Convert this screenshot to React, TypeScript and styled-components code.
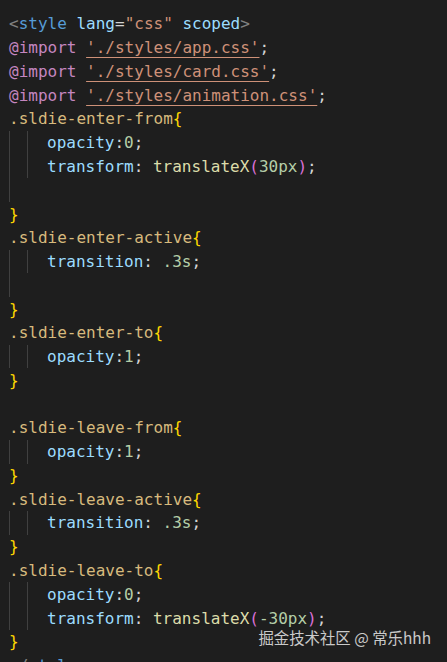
import React from "react";
import styled, { createGlobalStyle } from "styled-components";

const Global = createGlobalStyle`
  html, body { margin: 0; padding: 0; background: #1e1e1e; }
  body { width: 447px; height: 662px; overflow: hidden; }
`;

type Kind =
  | "tagp" | "tag" | "attr" | "eq" | "str" | "kw" | "sel" | "brace"
  | "prop" | "punc" | "num" | "fn" | "paren";

const colors: Record<Kind, string> = {
  tagp: "#808080",
  tag: "#569cd6",
  attr: "#9cdcfe",
  eq: "#d4d4d4",
  str: "#ce9178",
  kw: "#c586c0",
  sel: "#d7ba7d",
  brace: "#ffd700",
  prop: "#9cdcfe",
  punc: "#d4d4d4",
  num: "#b5cea8",
  fn: "#dcdcaa",
  paren: "#da70d6",
};

const Screen = styled.div`
  position: relative;
  width: 447px;
  height: 662px;
  overflow: hidden;
  background: #1e1e1e;
`;

const Editor = styled.div`
  display: flex;
  flex-direction: column;
  padding: 12px 0 0 9px;
  font-family: "DejaVu Sans Mono", "Liberation Mono", monospace;
  font-size: 16px;
`;

const Line = styled.div`
  display: flex;
  align-items: center;
  height: 23.77px;
  white-space: pre;
`;

const Guide = styled.span<{ $w: number }>`
  align-self: stretch;
  width: ${(p) => p.$w}px;
  flex: none;
  border-left: 1px solid #404040;
  box-sizing: border-box;
`;

const Token = styled.span<{ $k: Kind; $link?: boolean }>`
  color: ${(p) => colors[p.$k]};
  text-decoration: ${(p) => (p.$link ? "underline" : "none")};
  text-underline-offset: 4px;
  text-decoration-thickness: 1px;
`;

const Watermark = styled.div`
  position: absolute;
  right: 16px;
  top: 626px;
  font-family: "Noto Sans CJK SC", "Noto Sans", sans-serif;
  font-size: 15.4px;
  line-height: 22px;
  color: rgba(235, 235, 235, 0.85);
`;

type T = [Kind, string, boolean?];
type L = { indent: number; toks: T[] };

const lines: L[] = [
  { indent: 0, toks: [["tagp", "<"], ["tag", "style"], ["eq", " "], ["attr", "lang"], ["eq", "="], ["str", "\"css\""], ["eq", " "], ["attr", "scoped"], ["tagp", ">"]] },
  { indent: 0, toks: [["kw", "@import"], ["punc", " "], ["str", "'./styles/app.css'", true], ["punc", ";"]] },
  { indent: 0, toks: [["kw", "@import"], ["punc", " "], ["str", "'./styles/card.css'", true], ["punc", ";"]] },
  { indent: 0, toks: [["kw", "@import"], ["punc", " "], ["str", "'./styles/animation.css'", true], ["punc", ";"]] },
  { indent: 0, toks: [["sel", ".sldie-enter-from"], ["brace", "{"]] },
  { indent: 2, toks: [["prop", "opacity"], ["punc", ":"], ["num", "0"], ["punc", ";"]] },
  { indent: 2, toks: [["prop", "transform"], ["punc", ": "], ["fn", "translateX"], ["paren", "("], ["num", "30px"], ["paren", ")"], ["punc", ";"]] },
  { indent: 1, toks: [] },
  { indent: 0, toks: [["brace", "}"]] },
  { indent: 0, toks: [["sel", ".sldie-enter-active"], ["brace", "{"]] },
  { indent: 2, toks: [["prop", "transition"], ["punc", ": "], ["num", ".3s"], ["punc", ";"]] },
  { indent: 1, toks: [] },
  { indent: 0, toks: [["brace", "}"]] },
  { indent: 0, toks: [["sel", ".sldie-enter-to"], ["brace", "{"]] },
  { indent: 2, toks: [["prop", "opacity"], ["punc", ":"], ["num", "1"], ["punc", ";"]] },
  { indent: 0, toks: [["brace", "}"]] },
  { indent: 0, toks: [] },
  { indent: 0, toks: [["sel", ".sldie-leave-from"], ["brace", "{"]] },
  { indent: 2, toks: [["prop", "opacity"], ["punc", ":"], ["num", "1"], ["punc", ";"]] },
  { indent: 0, toks: [["brace", "}"]] },
  { indent: 0, toks: [["sel", ".sldie-leave-active"], ["brace", "{"]] },
  { indent: 2, toks: [["prop", "transition"], ["punc", ": "], ["num", ".3s"], ["punc", ";"]] },
  { indent: 0, toks: [["brace", "}"]] },
  { indent: 0, toks: [["sel", ".sldie-leave-to"], ["brace", "{"]] },
  { indent: 2, toks: [["prop", "opacity"], ["punc", ":"], ["num", "0"], ["punc", ";"]] },
  { indent: 2, toks: [["prop", "transform"], ["punc", ": "], ["fn", "translateX"], ["paren", "("], ["num", "-30px"], ["paren", ")"], ["punc", ";"]] },
  { indent: 0, toks: [["brace", "}"]] },
  { indent: 0, toks: [["tagp", "</"], ["tag", "style"], ["tagp", ">"]] },
];

export default function App() {
  return (
    <>
      <Global />
      <Screen>
        <Editor>
          {lines.map((l, i) => (
            <Line key={i}>
              {l.indent >= 1 && <Guide $w={18} />}
              {l.indent >= 2 && <Guide $w={20} />}
              {l.toks.map(([k, s, link], j) => (
                <Token key={j} $k={k} $link={link}>
                  {s}
                </Token>
              ))}
            </Line>
          ))}
        </Editor>
        <Watermark>掘金技术社区 @ 常乐hhh</Watermark>
      </Screen>
    </>
  );
}
